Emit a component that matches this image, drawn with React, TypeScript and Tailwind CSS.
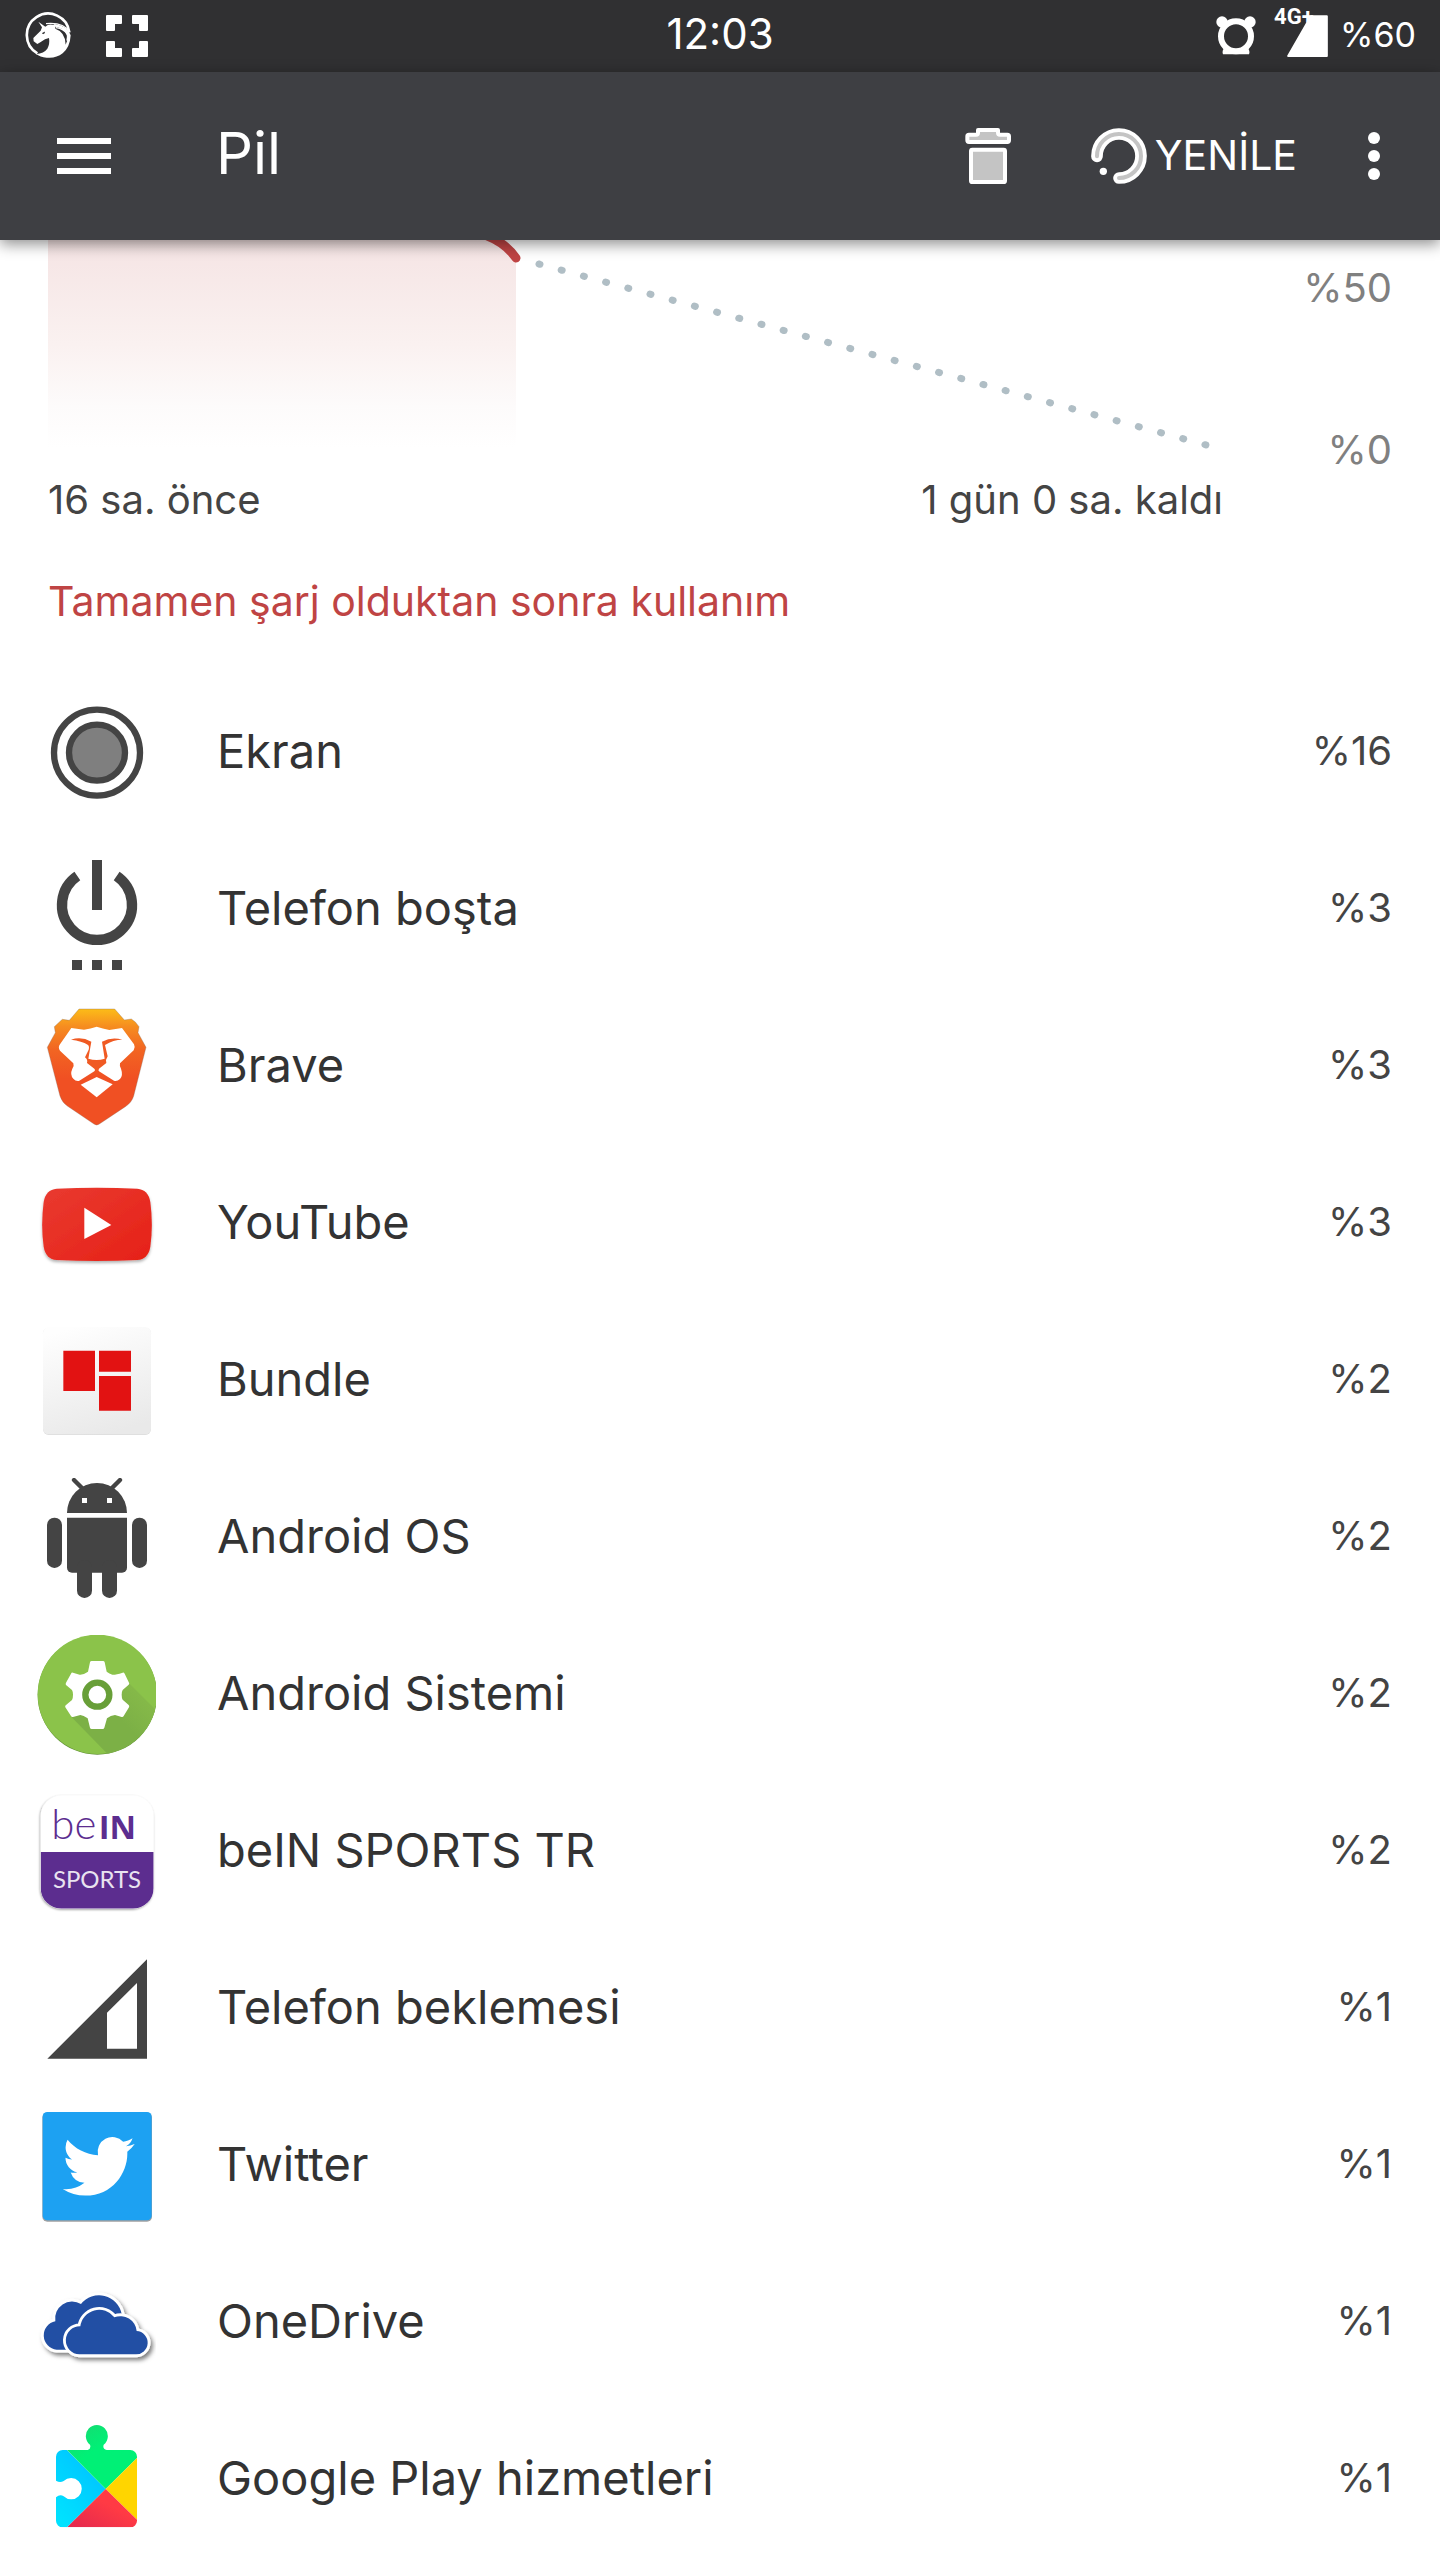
import type { ReactNode } from "react";

const ROW_ICON = "size-[120px] shrink-0";

function ScreenIcon() {
  return (
    <svg viewBox="48 39 360 360" className={ROW_ICON} aria-hidden="true">
      <circle cx="231" cy="218" r="129" fill="none" stroke="#444" strokeWidth="19" />
      <circle cx="231" cy="218" r="84" fill="#7f7f7f" stroke="#444" strokeWidth="19" />
    </svg>
  );
}

function IdleIcon() {
  return (
    <svg viewBox="48 510 360 360" className={ROW_ICON} aria-hidden="true">
      <path d="M172 588A105 105 0 1 0 290 588" fill="none" stroke="#444" strokeWidth="31" />
      <path d="M216 540h30v150h-30zM156 840h30v30h-30zM216 840h30v30h-30zM276 840h30v30h-30z" fill="#444" />
    </svg>
  );
}

function BraveIcon() {
  return (
    <svg viewBox="48 51 360 360" className={ROW_ICON} aria-hidden="true">
      <defs>
        <linearGradient id="brave" x1="0" y1="0" x2="0" y2="1">
          <stop offset="0" stopColor="#fcbc18" />
          <stop offset="0.15" stopColor="#f68d20" />
          <stop offset="0.35" stopColor="#f26522" />
          <stop offset="0.6" stopColor="#f05023" />
        </linearGradient>
      </defs>
      <path
        d="M177 57H284L313 90L334 87Q348 95 357 110L354 128L378 172L341 318Q335 338 316 350L238 402Q230 408 222 402L142 348Q126 337 120 318L82 172L106 128L103 110L127 88L148 91Z"
        fill="url(#brave)"
        stroke="#8a6a5a"
        strokeWidth="1"
      />
      <path
        d="M154 114L192 119Q212 116 230 110Q248 116 268 120L306 114L342 163Q347 172 341 181L300 220Q298 226 303 236Q310 256 300 267Q291 275 282 272L237 244Q233 239 237 236L230 228L224 236Q227 240 223 244L178 272Q168 275 160 266Q149 254 157 236Q163 226 160 220L120 182Q113 172 120 163Z"
        fill="#fff"
      />
      <path
        d="M153 149Q184 138 214 155L205 206Q230 214 254 206L246 155Q276 139 307 149Q280 149 255 165L263 199Q256 209 259 219L237 236L230 245L223 236L201 219Q204 209 195 202L206 179Q209 168 203 164Q186 153 153 149Z"
        fill="#f05a23"
      />
      <path d="M230 261L278 283L230 322L182 284Z" fill="#fff" />
    </svg>
  );
}

function YouTubeIcon() {
  return (
    <svg viewBox="48 522 360 360" className={ROW_ICON} aria-hidden="true">
      <defs>
        <linearGradient id="youtube" x1="0" y1="0" x2="1" y2="1">
          <stop offset="0" stopColor="#e93a30" />
          <stop offset="1" stopColor="#e62117" />
        </linearGradient>
        <filter id="youtubeShadow" x="-10%" y="-10%" width="120%" height="130%">
          <feDropShadow dx="0" dy="6" stdDeviation="4" floodOpacity="0.3" />
        </filter>
      </defs>
      <path
        d="M110 596Q230 590 352 596Q385 599 391 636Q400 705 391 770Q385 807 352 810Q230 816 110 810Q77 807 71 770Q62 705 71 636Q77 599 110 596Z"
        fill="url(#youtube)"
        filter="url(#youtubeShadow)"
      />
      <path d="M193 653L274 705L193 747Z" fill="#fff" />
    </svg>
  );
}

function BundleIcon() {
  return (
    <svg viewBox="48 63 360 360" className={ROW_ICON} aria-hidden="true">
      <defs>
        <linearGradient id="bundle" x1="0.3" y1="0" x2="0.6" y2="1">
          <stop offset="0" stopColor="#fefefe" />
          <stop offset="1" stopColor="#e9e9e9" />
        </linearGradient>
      </defs>
      <rect x="69" y="83" width="324" height="322" rx="17" fill="#dcdcdc" />
      <rect x="69" y="81" width="324" height="322" rx="17" fill="url(#bundle)" />
      <path d="M130 152h95v121h-95zM237 152h96v63h-96zM237 228h96v104h-96z" fill="#e21212" />
    </svg>
  );
}

function AndroidIcon() {
  return (
    <svg viewBox="48 534 360 360" className={ROW_ICON} aria-hidden="true">
      <g fill="#444">
        <path d="M141 639A90 90 0 0 1 321 639Z" />
        <path d="M162 540L192 570M300 540L270 570" stroke="#444" strokeWidth="13" strokeLinecap="round" />
        <path d="M141 653H321V803A15 15 0 0 1 306 818H156A15 15 0 0 1 141 803Z" />
        <rect x="81" y="653" width="45" height="151" rx="22" />
        <rect x="336" y="653" width="45" height="151" rx="22" />
        <rect x="171" y="780" width="45" height="114" rx="22" />
        <rect x="246" y="780" width="45" height="114" rx="22" />
      </g>
      <path d="M186 594h15v15h-15zM261 594h15v15h-15z" fill="#fff" />
    </svg>
  );
}

function SystemIcon() {
  return (
    <svg viewBox="48 45 360 360" className={ROW_ICON} aria-hidden="true">
      <defs>
        <clipPath id="systemDisc">
          <circle cx="232" cy="224" r="179" />
        </clipPath>
        <linearGradient id="systemShade" x1="0.2" y1="0.5" x2="0.7" y2="0.1">
          <stop offset="0.4" stopColor="#7cb046" />
          <stop offset="1" stopColor="#86ba49" />
        </linearGradient>
      </defs>
      <circle cx="232" cy="225" r="179" fill="#5f8f35" />
      <circle cx="232" cy="223" r="179" fill="#8bc34a" />
      <path d="M329 191L460 322L400 440H300L155 292Z" fill="url(#systemShade)" clipPath="url(#systemDisc)" />
      <path
        d="M204 155L210 127Q211 123 215 123H249Q253 123 254 127L260 155Q268 161 277 164Q283 166 308 158Q312 157 314 161L327 188Q329 191 326 194L308 210Q305 215 305 224Q305 234 308 239L326 255Q329 258 327 262L311 288Q309 292 305 291L285 285Q272 286 261 295L253 323Q252 327 248 327H215Q211 327 210 323L203 295Q190 286 181 285L159 291Q155 292 153 288L136 262Q134 258 138 255L156 240Q159 234 159 224Q159 215 156 210L138 195Q136 192 138 188L153 161Q155 156 159 158L179 164Q190 165 204 155Z"
        fill="#fff"
      />
      <circle cx="232" cy="224" r="36" fill="#fff" stroke="#689f38" strokeWidth="19" />
    </svg>
  );
}

function BeinIcon() {
  return (
    <svg viewBox="48 516 360 360" className={ROW_ICON} role="img" aria-label="beIN SPORTS">
      <defs>
        <clipPath id="beinTile">
          <rect x="62" y="526" width="339" height="340" rx="62" />
        </clipPath>
        <filter id="beinShadow" x="-10%" y="-10%" width="120%" height="120%">
          <feDropShadow dx="-2" dy="3" stdDeviation="3" floodOpacity="0.4" />
        </filter>
      </defs>
      <rect x="62" y="526" width="339" height="340" rx="62" fill="#fff" filter="url(#beinShadow)" />
      <rect x="62" y="696" width="339" height="170" fill="#5c2d8f" clipPath="url(#beinTile)" />
      <g fill="#5c2d8f">
        <text x="94" y="658" fontSize="126" fontWeight="300" className="font-['Lato',sans-serif]">be</text>
        <text x="236" y="658" fontSize="98" fontWeight="700" className="font-['Open_Sans',sans-serif]">IN</text>
        <text x="231" y="805" fontSize="72" fill="#e9e3f0" textAnchor="middle" className="font-['Lato',sans-serif]">SPORTS</text>
      </g>
    </svg>
  );
}

function StandbyIcon() {
  return (
    <svg viewBox="48 27 360 360" className={ROW_ICON} aria-hidden="true">
      <path d="M82 356L381 58V356ZM261 218V326H351V129Z" fill="#444" fillRule="evenodd" />
    </svg>
  );
}

function TwitterIcon() {
  return (
    <svg viewBox="48 498 360 360" className={ROW_ICON} aria-hidden="true">
      <rect x="67" y="518" width="329" height="327" rx="15" fill="#777" opacity="0.7" />
      <rect x="68" y="516" width="327" height="325" rx="14" fill="#1da1f2" />
      <path
        transform="translate(128 571) scale(9)"
        fill="#fff"
        d="M23.953 4.57a10 10 0 01-2.825.775 4.958 4.958 0 002.163-2.723c-.951.555-2.005.959-3.127 1.184a4.92 4.92 0 00-8.384 4.482C7.69 8.095 4.067 6.13 1.64 3.162a4.822 4.822 0 00-.666 2.475c0 1.71.87 3.213 2.188 4.096a4.904 4.904 0 01-2.228-.616v.06a4.923 4.923 0 003.946 4.827 4.996 4.996 0 01-2.212.085 4.936 4.936 0 004.604 3.417 9.867 9.867 0 01-6.102 2.105c-.39 0-.779-.023-1.17-.067a13.995 13.995 0 007.557 2.209c9.053 0 13.998-7.496 13.998-13.985 0-.21 0-.42-.015-.63A9.935 9.935 0 0024 4.59z"
      />
    </svg>
  );
}

function OneDriveIcon() {
  return (
    <svg viewBox="48 39 360 360" className={ROW_ICON} aria-hidden="true">
      <defs>
        <filter id="cloudShadow" x="-10%" y="-10%" width="125%" height="130%">
          <feDropShadow dx="7" dy="9" stdDeviation="6" floodOpacity="0.5" />
        </filter>
      </defs>
      <g fill="#2350a4" stroke="#fff" strokeWidth="17" strokeLinejoin="round" paintOrder="stroke" filter="url(#cloudShadow)">
        <path d="M110 299A43 43 0 0 1 106 214A51 51 0 0 1 183 162A69 69 0 0 1 305 192L300 299Z" />
        <path d="M178 313A42 42 0 0 1 181 229A57 57 0 0 1 283 202A49 49 0 0 1 350 243A35 35 0 0 1 346 313Z" />
      </g>
    </svg>
  );
}

function PlayServicesIcon() {
  return (
    <svg viewBox="48 510 360 360" className={ROW_ICON} aria-hidden="true">
      <defs>
        <clipPath id="puzzle">
          <path d="M128 600H203Q214 597 210 584A33 33 0 1 1 251 584Q247 597 260 600H331A20 20 0 0 1 351 620V812A20 20 0 0 1 331 832H128A20 20 0 0 1 108 812V742Q120 731 131 739A32 32 0 1 0 131 693Q120 700 108 692V620A20 20 0 0 1 128 600Z" />
        </clipPath>
        <linearGradient id="puzzleBlue" x1="1" y1="0" x2="0.3" y2="1">
          <stop offset="0" stopColor="#00bcff" />
          <stop offset="1" stopColor="#00e2ff" />
        </linearGradient>
        <linearGradient id="puzzleGreen" x1="0" y1="0" x2="0.4" y2="0.6">
          <stop offset="0.3" stopColor="#12de72" />
          <stop offset="0.8" stopColor="#00f076" />
        </linearGradient>
        <linearGradient id="puzzleRed" x1="1" y1="0" x2="0" y2="1">
          <stop offset="0.4" stopColor="#ff3a44" />
          <stop offset="1" stopColor="#e0264f" />
        </linearGradient>
      </defs>
      <g clipPath="url(#puzzle)">
        <path d="M100 590H131L257 717L141 832V840H100Z" fill="url(#puzzleBlue)" />
        <path d="M141 600V510H360V615L257 717Z" fill="url(#puzzleGreen)" />
        <path d="M360 615L257 717L360 818Z" fill="#ffd500" />
        <path d="M257 717L360 818V840H133Z" fill="url(#puzzleRed)" />
      </g>
    </svg>
  );
}

function UnicornIcon() {
  return (
    <svg viewBox="72 36 144 144" className="size-12" aria-hidden="true">
      <path d="M112 160A64 64 0 1 1 208 97" fill="none" stroke="#fff" strokeWidth="8" />
      <path
        d="M115 65L136 80Q146 71 160 75L164 72Q204 78 212 106Q210 142 188 160Q168 176 140 173Q120 171 108 162Q132 160 142 146Q150 132 147 114L135 118L121 127L112 132L101 124L100 114L122 92L126 82Z"
        fill="#fff"
      />
      <path d="M138 71Q190 66 209 96" fill="none" stroke="#fff" strokeWidth="4" />
      <path d="M166 86Q196 96 197 134Q208 112 196 96Q186 83 166 80Z" fill="#303032" />
      <path d="M168 83Q192 86 202 104Q204 112 201 122" fill="none" stroke="#fff" strokeWidth="4" />
      <path d="M127 100L134 96L132 101Z" fill="#303032" stroke="#303032" strokeWidth="2" />
    </svg>
  );
}

function CornersIcon() {
  return (
    <svg viewBox="318 45 126 126" className="size-[42px]" aria-hidden="true">
      <path
        d="M321 48H363V69H342V90H321ZM399 48H441V90H420V69H399ZM321 126H342V147H363V168H321ZM420 126H441V168H399V147H420Z"
        fill="#fff"
        stroke="#fff"
        strokeWidth="6"
        strokeLinejoin="round"
      />
    </svg>
  );
}

function AlarmIcon() {
  return (
    <svg viewBox="831 47 120 120" className="size-10" aria-hidden="true">
      <g fill="#fff">
        <circle cx="849" cy="65" r="17" />
        <circle cx="933" cy="65" r="17" />
        <path d="M856 142L926 142Q934 152 930 162H852Q848 152 856 142Z" />
      </g>
      <circle cx="891" cy="108" r="45" fill="#303032" stroke="#fff" strokeWidth="18" />
    </svg>
  );
}

function SignalIcon() {
  return (
    <svg viewBox="1047 44 123 127" className="h-[42px] w-[41px]" aria-hidden="true">
      <path d="M1119 48H1167V168H1050Z" fill="#fff" stroke="#fff" strokeWidth="6" strokeLinejoin="round" />
    </svg>
  );
}

function TrashIcon() {
  return (
    <svg viewBox="72 384 138 168" className="h-14 w-[46px]" aria-hidden="true">
      <g fill="#c4c4c4" stroke="#fff" strokeWidth="12" strokeLinejoin="round">
        <path d="M111 390H171V398Q171 404 177 404H199Q204 404 204 409V421Q204 426 199 426H84Q79 426 79 421V409Q79 404 84 404H105Q111 404 111 398Z" />
        <rect x="90" y="449" width="102" height="97" rx="4" />
      </g>
    </svg>
  );
}

function RefreshIcon() {
  return (
    <svg viewBox="453 384 168 168" className="size-14" aria-hidden="true">
      <g fill="none" strokeLinecap="round">
        <path d="M471 469A66 66 0 1 1 537 534" stroke="#fff" strokeWidth="35" />
        <path d="M471 469A66 66 0 1 1 537 534" stroke="#c4c4c4" strokeWidth="12" />
      </g>
      <circle cx="490" cy="514" r="11" fill="#fff" />
    </svg>
  );
}

const USAGE: { name: string; percent: string; icon: ReactNode }[] = [
  { name: "Ekran", percent: "%16", icon: <ScreenIcon /> },
  { name: "Telefon boşta", percent: "%3", icon: <IdleIcon /> },
  { name: "Brave", percent: "%3", icon: <BraveIcon /> },
  { name: "YouTube", percent: "%3", icon: <YouTubeIcon /> },
  { name: "Bundle", percent: "%2", icon: <BundleIcon /> },
  { name: "Android OS", percent: "%2", icon: <AndroidIcon /> },
  { name: "Android Sistemi", percent: "%2", icon: <SystemIcon /> },
  { name: "beIN SPORTS TR", percent: "%2", icon: <BeinIcon /> },
  { name: "Telefon beklemesi", percent: "%1", icon: <StandbyIcon /> },
  { name: "Twitter", percent: "%1", icon: <TwitterIcon /> },
  { name: "OneDrive", percent: "%1", icon: <OneDriveIcon /> },
  { name: "Google Play hizmetleri", percent: "%1", icon: <PlayServicesIcon /> },
];

function StatusBar() {
  return (
    <div className="grid h-[72px] grid-cols-3 items-center bg-[#303032] pr-6 pl-6 text-white">
      <div className="flex items-center gap-[34px]">
        <UnicornIcon />
        <CornersIcon />
      </div>
      <time className="pb-1 text-center text-[42px] leading-[50px]">12:03</time>
      <div className="flex items-center justify-end gap-3">
        <AlarmIcon />
        <div className="relative ml-[19px]">
          <SignalIcon />
          <span className="absolute -top-3 -left-[13px] font-['Roboto',sans-serif] text-[22px] leading-7 font-bold">4G+</span>
        </div>
        <span className="pb-0.5 text-[34px] leading-[50px]">%60</span>
      </div>
    </div>
  );
}

function Toolbar() {
  return (
    <header className="relative z-10 flex h-[168px] items-center bg-[#3e3f43] pr-[42px] pl-[57px] text-white shadow-[0_4px_14px_rgba(0,0,0,0.45)]">
      <button type="button" aria-label="Menü" className="flex w-[54px] shrink-0 flex-col gap-[9px]">
        <span className="h-1.5 w-full bg-white" />
        <span className="h-1.5 w-full bg-white" />
        <span className="h-1.5 w-full bg-white" />
      </button>
      <h1 className="ml-[105px] flex-1 pb-1.5 text-[58px] leading-[72px]">Pil</h1>
      <button type="button" aria-label="Sil" className="mr-20">
        <TrashIcon />
      </button>
      <button type="button" className="mr-[53px] flex items-center gap-2 text-[41px] leading-[50px]">
        <RefreshIcon />
        <span className="pb-0.5">YENİLE</span>
      </button>
      <button type="button" aria-label="Diğer seçenekler" className="flex w-12 flex-col items-center gap-1.5">
        <span className="size-3 rounded-full bg-white" />
        <span className="size-3 rounded-full bg-white" />
        <span className="size-3 rounded-full bg-white" />
      </button>
    </header>
  );
}

function BatteryChart() {
  return (
    <section className="flex px-12 text-[40px] leading-[50px] text-[#444]">
      <div className="flex-1">
        <svg viewBox="48 240 1175 235" className="block w-full" role="img" aria-label="Pil seviyesi">
          <defs>
            <linearGradient id="level" x1="0" y1="0" x2="0" y2="1">
              <stop offset="0" stopColor="#f5e4e4" />
              <stop offset="0.5" stopColor="#faf1f0" />
              <stop offset="0.8" stopColor="#fdfbfb" />
              <stop offset="1" stopColor="#ffffff" />
            </linearGradient>
          </defs>
          <path d="M48 240H496L516 262V448H48Z" fill="url(#level)" />
          <path d="M474 232Q502 238 516 258" fill="none" stroke="#bf4444" strokeWidth="9" strokeLinecap="round" />
          <path
            d="M539 264L1206 445"
            fill="none"
            stroke="#b0bec5"
            strokeWidth="7"
            strokeLinecap="round"
            strokeDasharray="1 22"
          />
        </svg>
        <div className="flex justify-between">
          <span>16 sa. önce</span>
          <span>1 gün 0 sa. kaldı</span>
        </div>
      </div>
      <div className="flex w-[169px] flex-col items-end gap-28 pt-[23px] text-[#808080]">
        <span>%50</span>
        <span>%0</span>
      </div>
    </section>
  );
}

export default function App() {
  return (
    <div className="min-h-screen bg-white font-['Inter',sans-serif]">
      <StatusBar />
      <Toolbar />
      <main>
        <BatteryChart />
        <h2 className="mt-[51px] px-12 text-[41px] leading-[50px] text-[#bf4444]">
          Tamamen şarj olduktan sonra kullanım
        </h2>
        <ul className="mt-[49px]">
          {USAGE.map((item) => (
            <li key={item.name} className="mb-px flex h-[156px] items-center pr-12 pl-9">
              {item.icon}
              <span className="ml-[61px] flex-1 pb-1 text-[47px] leading-[60px] text-[#333]">{item.name}</span>
              <span className="pb-1 text-[40px] leading-[50px] text-[#444]">{item.percent}</span>
            </li>
          ))}
        </ul>
      </main>
    </div>
  );
}
